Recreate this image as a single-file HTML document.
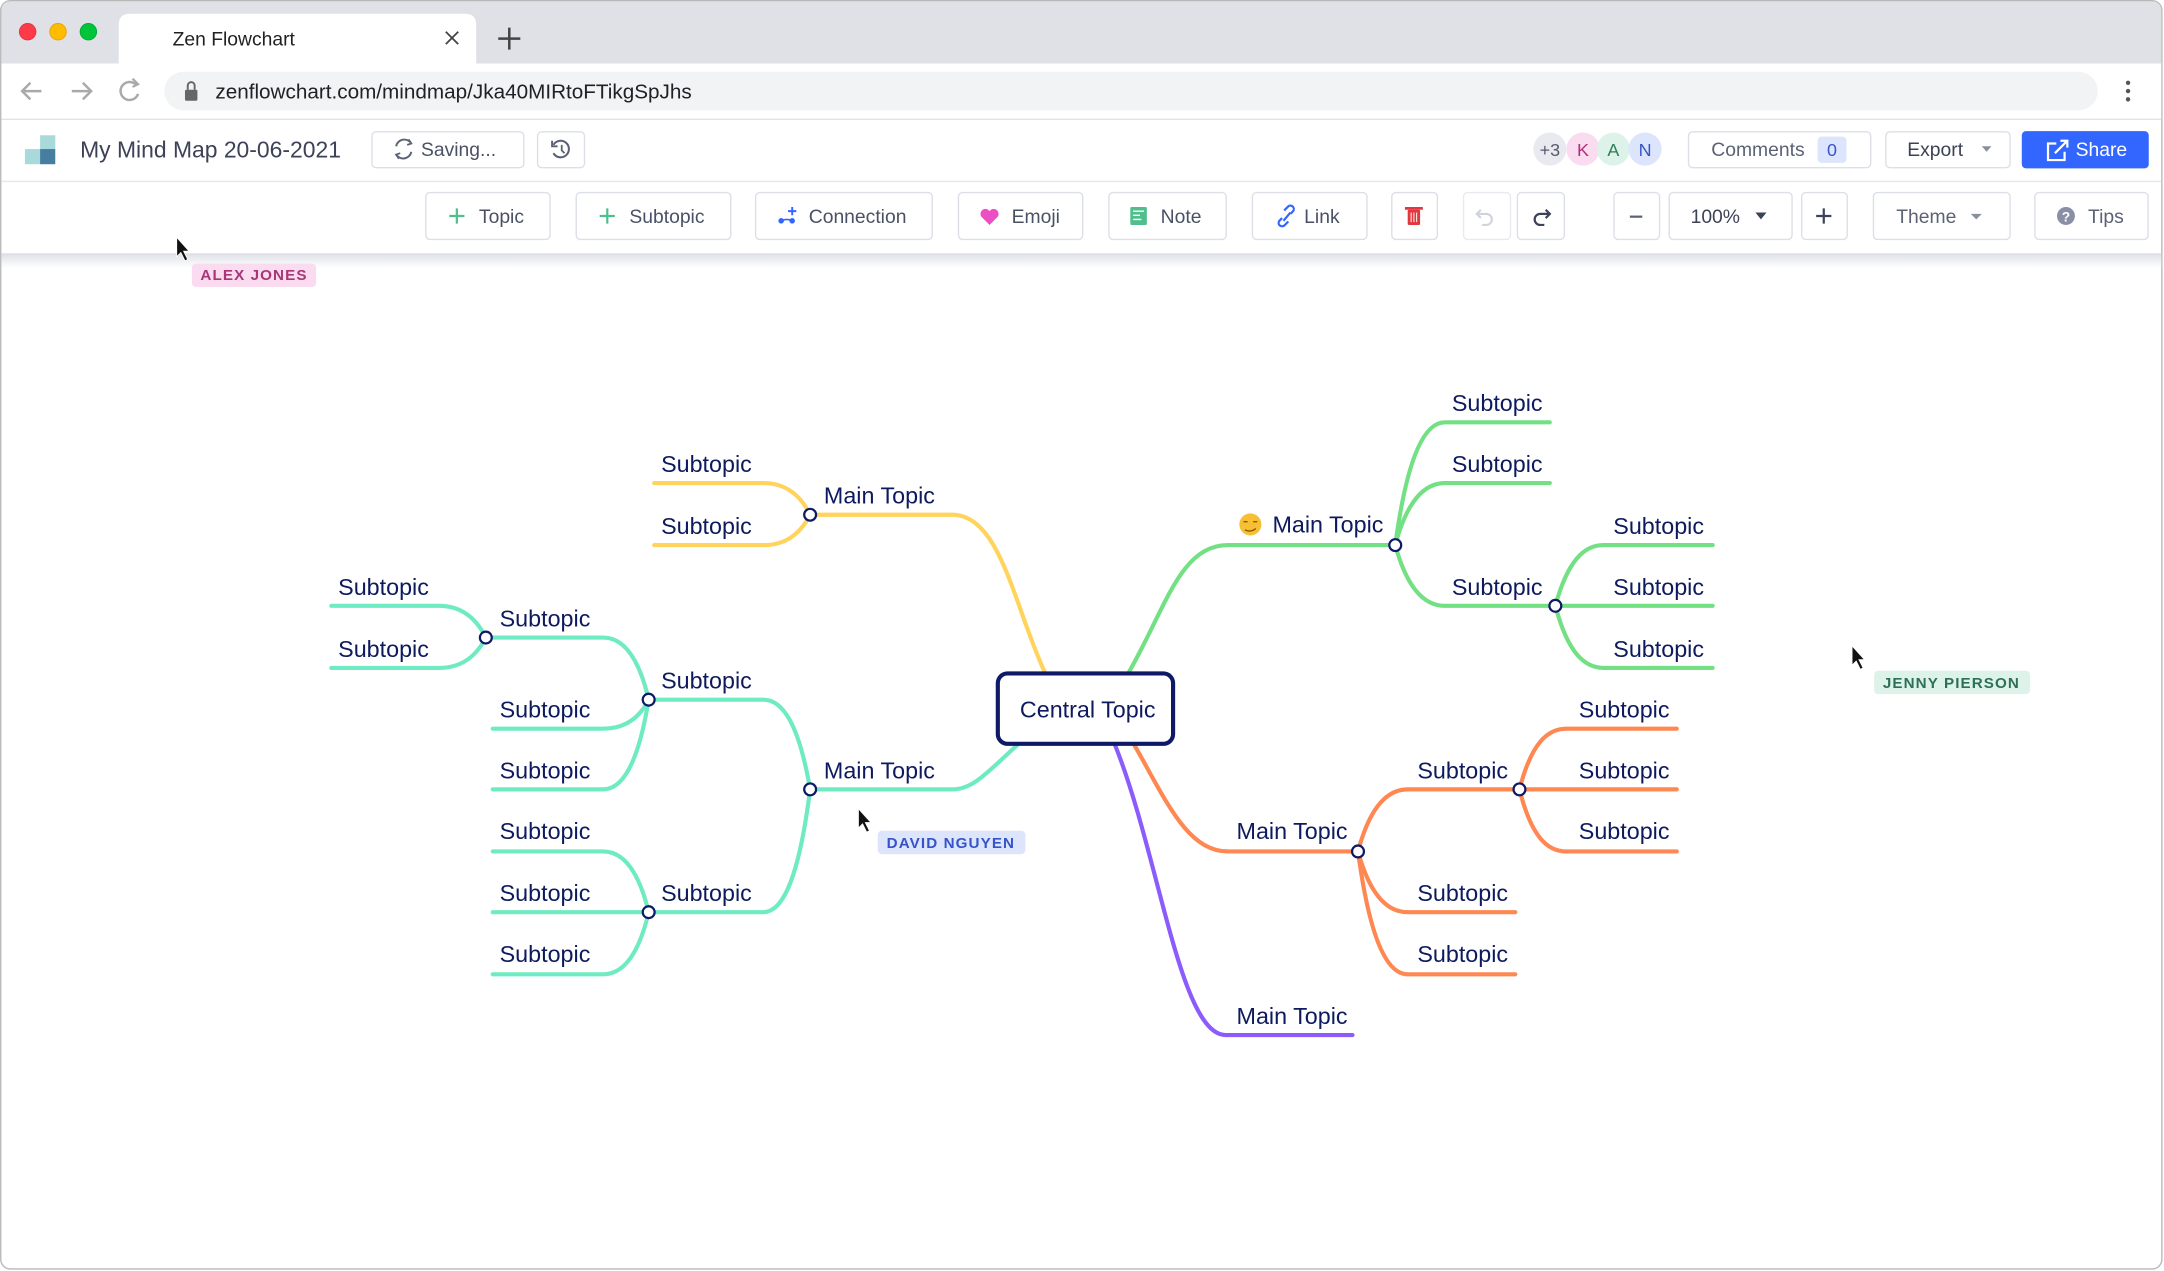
<!DOCTYPE html>
<html><head><meta charset="utf-8"><style>
html,body{margin:0;padding:0;background:#fff;width:2164px;height:1271px;overflow:hidden}
svg{display:block}
text{font-family:"Liberation Sans",sans-serif}
</style></head><body>
<svg width="2164" height="1271" viewBox="0 0 1568 921" xmlns="http://www.w3.org/2000/svg">
<defs>
<linearGradient id="sh" x1="0" y1="0" x2="0" y2="1"><stop offset="0" stop-color="#dfe1e8"/><stop offset="1" stop-color="#fff"/></linearGradient>
</defs>
<rect x="0.5" y="0.5" width="1566" height="919" rx="7" fill="#fff" stroke="#b8b8b8"/>
<path d="M1,8 Q1,1 8,1 L1559,1 Q1566,1 1566,8 L1566,46 L1,46 Z" fill="#dfe1e6"/>
<circle cx="20" cy="23" r="6" fill="#fe3c48" stroke="#e0323c" stroke-width=".6"/>
<circle cx="42" cy="23" r="6" fill="#ffbb00" stroke="#e0a400" stroke-width=".6"/>
<circle cx="64" cy="23" r="6" fill="#00c43a" stroke="#00a832" stroke-width=".6"/>
<path d="M86,46 L86,18 Q86,10 94,10 L337,10 Q345,10 345,18 L345,46 Z" fill="#fff"/>
<text x="125" y="33" font-size="14" fill="#222">Zen Flowchart</text>
<path d="M323,23 l9,9 M332,23 l-9,9" stroke="#444" stroke-width="1.3"/>
<path d="M369,20 v16 M361,28 h16" stroke="#444" stroke-width="1.8"/>
<rect x="1" y="46" width="1565" height="40" fill="#fff"/>
<path d="M30,66 h-14 M22,60 l-6,6 6,6" stroke="#aaa" stroke-width="1.8" fill="none"/>
<path d="M52,66 h14 M60,60 l6,6 -6,6" stroke="#aaa" stroke-width="1.8" fill="none"/>
<path d="M99,62 A6.5,6.5 0 1 0 100,68" stroke="#aaa" stroke-width="1.8" fill="none"/><path d="M96,57 l4,4 -4,2" stroke="#aaa" stroke-width="1.6" fill="none"/>
<rect x="119" y="52" width="1401" height="28" rx="14" fill="#f1f3f4"/>
<rect x="134" y="65" width="9" height="8" rx="1" fill="#666"/><path d="M136,65 v-3 a2.5,2.5 0 0 1 5,0 v3" stroke="#666" stroke-width="1.4" fill="none"/>
<text x="156" y="71.5" font-size="15" fill="#202124">zenflowchart.com/mindmap/Jka40MIRtoFTikgSpJhs</text>
<circle cx="1542" cy="60" r="1.6" fill="#555"/><circle cx="1542" cy="66" r="1.6" fill="#555"/><circle cx="1542" cy="72" r="1.6" fill="#555"/>
<line x1="1" y1="86.5" x2="1566" y2="86.5" stroke="#e1e3e8"/>
<rect x="18" y="108" width="11" height="11" fill="#a9dadb"/><rect x="29" y="98" width="11" height="10" fill="#a9dadb"/><rect x="29" y="108" width="11" height="11" fill="#457ea0"/>
<text x="58" y="114" font-size="16.6" fill="#3c4257">My Mind Map 20-06-2021</text>
<rect x="269.5" y="95.5" width="110" height="26" rx="3" fill="#fff" stroke="#dcdfe7"/>
<path d="M298,104 a6,6 0 0 0 -11,2 M287,112 a6,6 0 0 0 11,-2" stroke="#5b6275" stroke-width="1.4" fill="none"/><path d="M296,101 l2,3 -3,1 M289,115 l-2,-3 3,-1" stroke="#5b6275" stroke-width="1.3" fill="none"/>
<text x="305" y="113" font-size="14" fill="#4b5165">Saving...</text>
<rect x="389.5" y="95.5" width="34" height="26" rx="3" fill="#fff" stroke="#dcdfe7"/>
<path d="M401,105 a6,6 0 1 1 0,6" stroke="#5b6275" stroke-width="1.5" fill="none"/><path d="M400,102 v4 h4" stroke="#5b6275" stroke-width="1.4" fill="none"/><path d="M407,105 v4 l2,2" stroke="#5b6275" stroke-width="1.3" fill="none"/>
<circle cx="1123" cy="108" r="12" fill="#e8eaf0"/><text x="1123" y="113" font-size="13" fill="#555a6b" text-anchor="middle">+3</text>
<circle cx="1147" cy="108" r="12" fill="#fadbef"/><text x="1147" y="113" font-size="13" fill="#b0307a" text-anchor="middle">K</text>
<circle cx="1169" cy="108" r="12" fill="#ddf3ea"/><text x="1169" y="113" font-size="13" fill="#2e7d57" text-anchor="middle">A</text>
<circle cx="1192" cy="108" r="12" fill="#dce5fc"/><text x="1192" y="113" font-size="13" fill="#3654c8" text-anchor="middle">N</text>
<rect x="1223.5" y="95.5" width="132" height="26" rx="3" fill="#fff" stroke="#dcdfe7"/>
<text x="1240" y="113" font-size="14" fill="#5b6275">Comments</text>
<rect x="1317" y="99" width="21" height="19" rx="3" fill="#dce5fc"/><text x="1327.5" y="113" font-size="13" fill="#3654c8" text-anchor="middle">0</text>
<rect x="1366.5" y="95.5" width="90" height="26" rx="3" fill="#fff" stroke="#dcdfe7"/>
<text x="1382" y="113" font-size="14" fill="#3c4257">Export</text><path d="M1436,106 h7 l-3.5,4 z" fill="#8a8fa0"/>
<rect x="1465" y="95" width="92" height="27" rx="3" fill="#3366ff"/>
<path d="M1490,104 h-6 v12 h12 v-6 M1489,111 l9,-9 M1493,102 h5 v5" stroke="#fff" stroke-width="1.6" fill="none"/>
<text x="1504" y="113" font-size="14" fill="#fff">Share</text>
<line x1="1" y1="131.5" x2="1566" y2="131.5" stroke="#e6e8ee"/>
<rect x="1" y="184" width="1565" height="10" fill="url(#sh)"/>
<line x1="1" y1="184" x2="1566" y2="184" stroke="#dde0e7"/>
<g fill="#fff" stroke="#dcdfe7">
<rect x="308.5" y="139.5" width="90" height="34" rx="3"/>
<rect x="417.5" y="139.5" width="112" height="34" rx="3"/>
<rect x="547.5" y="139.5" width="128" height="34" rx="3"/>
<rect x="694.5" y="139.5" width="90" height="34" rx="3"/>
<rect x="803.5" y="139.5" width="85" height="34" rx="3"/>
<rect x="907.5" y="139.5" width="83" height="34" rx="3"/>
<rect x="1008.5" y="139.5" width="33" height="34" rx="3"/>
<rect x="1060.5" y="139.5" width="34" height="34" rx="3" stroke="#e8eaef"/>
<rect x="1099.5" y="139.5" width="34" height="34" rx="3"/>
<rect x="1169.5" y="139.5" width="33" height="34" rx="3"/>
<rect x="1209.5" y="139.5" width="89" height="34" rx="3"/>
<rect x="1305.5" y="139.5" width="33" height="34" rx="3"/>
<rect x="1357.5" y="139.5" width="99" height="34" rx="3"/>
<rect x="1474.5" y="139.5" width="82" height="34" rx="3"/>
</g>
<g font-size="14" fill="#4b5165">
<path d="M331,151 v11 M325.5,156.5 h11" stroke="#4fbf8c" stroke-width="1.6"/><text x="347" y="161.5">Topic</text>
<path d="M440,151 v11 M434.5,156.5 h11" stroke="#4fbf8c" stroke-width="1.6"/><text x="456" y="161.5">Subtopic</text>
<circle cx="566" cy="160" r="2" fill="#3366ff"/><circle cx="574" cy="160" r="2" fill="#3366ff"/><path d="M566,160 q4,-2 8,0" stroke="#3366ff" stroke-width="1.2" fill="none"/><path d="M574,150 v6 M571,153 h6" stroke="#3366ff" stroke-width="1.4"/><text x="586" y="161.5">Connection</text>
<path d="M717,163 l-6,-6 a3.3,3.3 0 0 1 6,-4 a3.3,3.3 0 0 1 6,4 z" fill="#ec4fc4"/><text x="733" y="161.5">Emoji</text>
<rect x="819" y="150" width="12" height="13" rx="1" fill="#4fbf8c"/><path d="M821,153 h8 M821,156 h5 M821,159 h6" stroke="#fff" stroke-width="1"/><text x="841" y="161.5">Note</text>
<path d="M929,158 l-2,2 a2.5,2.5 0 0 0 3.5,3.5 l3,-3 M935,155 l2,-2 a2.5,2.5 0 0 0 -3.5,-3.5 l-3,3 M930,160 l5,-6" stroke="#3366ff" stroke-width="1.6" fill="none"/><text x="945" y="161.5">Link</text>
<rect x="1020" y="152" width="9" height="11" rx="1" fill="#e0383e"/><rect x="1018" y="150" width="13" height="2" fill="#e0383e"/><path d="M1022.5,154 v7 M1024.5,154 v7 M1026.5,154 v7" stroke="#fff" stroke-width=".7"/>
<path d="M1073,152 l-3,3 3,3 M1070,155 h7 a4,4 0 0 1 0,8 h-3" stroke="#cfd3dc" stroke-width="1.5" fill="none"/>
<path d="M1120,152 l3,3 -3,3 M1123,155 h-7 a4,4 0 0 0 0,8 h3" stroke="#3c4257" stroke-width="1.6" fill="none"/>
<path d="M1181,157 h9" stroke="#5b6275" stroke-width="1.6"/>
<text x="1225" y="161.5" fill="#3c4257">100%</text><path d="M1272,154 h8 l-4,5 z" fill="#3c4257"/>
<path d="M1321.5,151 v11 M1316,156.5 h11" stroke="#3c4257" stroke-width="1.6"/>
<text x="1374" y="161.5" fill="#5b6275">Theme</text><path d="M1428,155 h8 l-4,4 z" fill="#8a8fa0"/>
<circle cx="1497" cy="156.5" r="6.5" fill="#8a8fa6"/><text x="1497" y="160.5" font-size="10" font-weight="bold" fill="#fff" text-anchor="middle">?</text><text x="1513" y="161.5" fill="#5b6275">Tips</text>
</g>
<g fill="none" stroke-width="3" stroke-linecap="round">
<g stroke="#ffd35c">
<path d="M757,487 C735,440 725,373 690,373 L587,373"/>
<path d="M587,373 C578.5,355.8 566.6,350 553,350 L474,350"/>
<path d="M587,373 C578.5,389.5 566.6,395 553,395 L474,395"/>
</g>
<g stroke="#72e083">
<path d="M818,487 C845,440 855,395 890,395 L1011,395"/>
<path d="M1011,395 C1020,328 1033,306 1047,306 L1123,306"/>
<path d="M1011,395 C1020,361 1033,350 1047,350 L1123,350"/>
<path d="M1011,395 C1020,428 1033,439 1047,439 L1127,439"/>
<path d="M1127,439 C1136,406 1148,395 1162,395 L1241,395"/>
<path d="M1127,439 L1241,439"/>
<path d="M1127,439 C1136,473 1148,484 1162,484 L1241,484"/>
</g>
<g stroke="#6eebc2">
<path d="M737,540 C715,560 705,572 690,572 L587,572"/>
<path d="M587,572 C578.5,523 566.6,507 553,507 L470,507"/>
<path d="M587,572 C578.5,639 566.6,661 553,661 L470,661"/>
<path d="M470,507 C462,473 450,462 437,462 L352,462"/>
<path d="M470,507 C462,523 450,528 437,528 L357,528"/>
<path d="M470,507 C462,556 450,572 437,572 L357,572"/>
<path d="M352,462 C343.5,445 331.6,439 318,439 L240,439"/>
<path d="M352,462 C343.5,478.5 331.6,484 318,484 L240,484"/>
<path d="M470,661 C462,628 450,617 437,617 L357,617"/>
<path d="M470,661 L357,661"/>
<path d="M470,661 C462,695 450,706 437,706 L357,706"/>
</g>
<g stroke="#ff8752">
<path d="M822,540 C845,580 860,617 890,617 L984,617"/>
<path d="M984,617 C993,583 1006,572 1020,572 L1101,572"/>
<path d="M984,617 C993,650 1006,661 1020,661 L1098,661"/>
<path d="M984,617 C993,684 1006,706 1020,706 L1098,706"/>
<path d="M1101,572 C1109.5,539 1121,528 1135,528 L1215,528"/>
<path d="M1101,572 L1215,572"/>
<path d="M1101,572 C1109.5,606 1121,617 1135,617 L1215,617"/>
</g>
<path stroke="#8b5cfb" d="M808,540 C840,620 855,750 888,750 L980,750"/>
</g>
<rect x="723" y="488" width="127" height="51" rx="7" fill="#fff" stroke="#0e1a66" stroke-width="3"/>
<g fill="#fff" stroke="#0e1a66" stroke-width="1.6">
<circle cx="587" cy="373" r="4.3"/><circle cx="1011" cy="395" r="4.3"/><circle cx="1127" cy="439" r="4.3"/>
<circle cx="587" cy="572" r="4.3"/><circle cx="470" cy="507" r="4.3"/><circle cx="470" cy="661" r="4.3"/><circle cx="352" cy="462" r="4.3"/>
<circle cx="984" cy="617" r="4.3"/><circle cx="1101" cy="572" r="4.3"/>
</g>
<g font-size="16.9" fill="#0e1a5e">
<text x="739" y="520">Central Topic</text>
<text x="597" y="365">Main Topic</text>
<text x="479" y="342">Subtopic</text><text x="479" y="387">Subtopic</text>
<circle cx="906" cy="380" r="8" fill="#f7c034"/><path d="M902,384 q4,2 8,-1" stroke="#8a5a00" stroke-width="1" fill="none"/><path d="M901,378 h3 M908,378 h3" stroke="#8a5a00" stroke-width="1"/>
<text x="922" y="386">Main Topic</text>
<text x="1052" y="298">Subtopic</text><text x="1052" y="342">Subtopic</text><text x="1052" y="431">Subtopic</text>
<text x="1169" y="387">Subtopic</text><text x="1169" y="431">Subtopic</text><text x="1169" y="476">Subtopic</text>
<text x="597" y="564">Main Topic</text>
<text x="479" y="499">Subtopic</text><text x="479" y="653">Subtopic</text>
<text x="362" y="454">Subtopic</text><text x="362" y="520">Subtopic</text><text x="362" y="564">Subtopic</text>
<text x="245" y="431">Subtopic</text><text x="245" y="476">Subtopic</text>
<text x="362" y="608">Subtopic</text><text x="362" y="653">Subtopic</text><text x="362" y="697">Subtopic</text>
<text x="896" y="608">Main Topic</text>
<text x="1027" y="564">Subtopic</text><text x="1027" y="653">Subtopic</text><text x="1027" y="697">Subtopic</text>
<text x="1144" y="520">Subtopic</text><text x="1144" y="564">Subtopic</text><text x="1144" y="608">Subtopic</text>
<text x="896" y="742">Main Topic</text>
</g>
<g fill="#111" stroke="#fff" stroke-width=".6">
<path d="M128,172 v14 l3,-3 3,6 2,-1 -3,-6 h4 z"/>
<path d="M622,586 v14 l3,-3 3,6 2,-1 -3,-6 h4 z"/>
<path d="M1342,468 v14 l3,-3 3,6 2,-1 -3,-6 h4 z"/>
</g>
<g font-size="11" letter-spacing=".8" font-weight="bold">
<rect x="139" y="191" width="90" height="17" rx="3" fill="#fadbef"/><text x="184" y="203" fill="#a83577" text-anchor="middle">ALEX JONES</text>
<rect x="636" y="602" width="107" height="17" rx="3" fill="#dce5fc"/><text x="689" y="614.5" fill="#3654c8" text-anchor="middle">DAVID NGUYEN</text>
<rect x="1358" y="486" width="113" height="17" rx="3" fill="#ddf3ea"/><text x="1414" y="498.5" fill="#2e7057" text-anchor="middle">JENNY PIERSON</text>
</g>
</svg>
</body></html>
